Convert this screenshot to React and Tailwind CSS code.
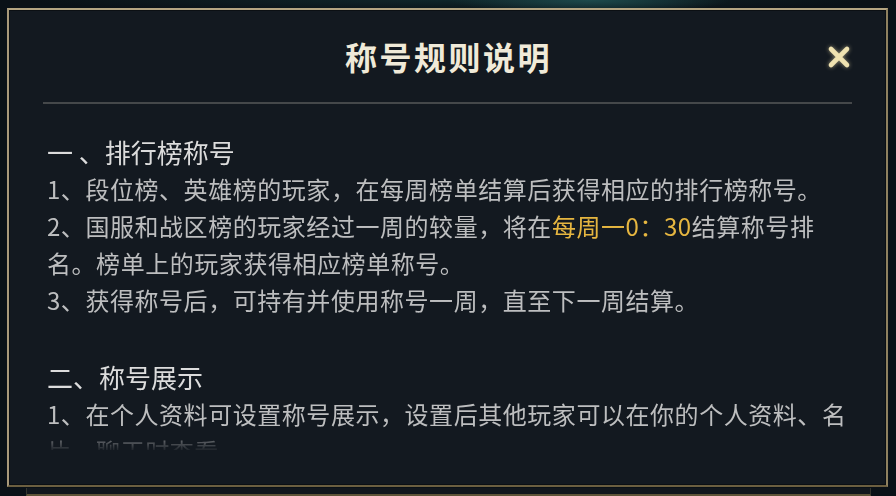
export default function App() {
  const body = "text-[24px] leading-[37px] tracking-[0.55px] text-[#bdbebf] whitespace-nowrap";
  const head = "text-[26px] leading-[37px] text-[#dcdcdc] whitespace-nowrap";
  return (
    <div
      className="w-[896px] h-[496px] overflow-hidden bg-[#0a1117] bg-[radial-gradient(ellipse_140px_14px_at_590px_0px,#1d4a4c_0%,transparent_100%),radial-gradient(ellipse_420px_12px_at_450px_0px,#10262a_0%,transparent_100%)] pt-[8px]"
      style={{ fontFamily: '"Noto Sans CJK SC", "Noto Sans", sans-serif' }}
    >
      {/* dialog frame */}
      <div className="ml-[7px] w-[881px] h-[479px] border-2 border-t-[#b4a582] border-l-[#a8997a] border-r-[#8f8160] border-b-[#6c5f40] bg-[#131920] shadow-[inset_0_0_0_1px_#0b0f13] flex flex-col">
        {/* header */}
        <div className="relative h-[92px] pt-[29px] flex justify-center">
          <h1 className="text-[32px] leading-[34px] font-bold tracking-[2.5px] pl-[2px] text-[#f0ead8]">
            称号规则说明
          </h1>
          <button className="absolute right-[35px] top-[35px] w-[24px] h-[24px] flex items-center justify-center drop-shadow-[0_0_2px_rgba(240,225,170,0.6)]">
            <svg viewBox="0 0 24 24" width="24" height="24">
              <path d="M4 4 L20 20 M20 4 L4 20" stroke="#efe2b0" strokeWidth="4.6" strokeLinecap="round" fill="none" />
            </svg>
          </button>
        </div>
        <div className="mx-[34px] h-[2px] bg-[#45484a]" />
        {/* scrolling rules text */}
        <div className="h-[346px] overflow-hidden pl-[38px] pt-[29px] [mask-image:linear-gradient(to_bottom,#000_322px,transparent_348px)]">
          <div className={head}>一 、排行榜称号</div>
          <div className={body}>1、段位榜、英雄榜的玩家，在每周榜单结算后获得相应的排行榜称号。</div>
          <div className={body}>
            2、国服和战区榜的玩家经过一周的较量，将在<span className="text-[#e6b640]">每周一0：30</span>结算称号排
          </div>
          <div className={body}>名。榜单上的玩家获得相应榜单称号。</div>
          <div className={body}>3、获得称号后，可持有并使用称号一周，直至下一周结算。</div>
          <div className={head + " mt-[40px]"}>二、称号展示</div>
          <div className={body}>1、在个人资料可设置称号展示，设置后其他玩家可以在你的个人资料、名</div>
          <div className={body}>片、聊天时查看。</div>
        </div>
      </div>
      {/* stacked panel behind */}
      <div className="ml-[26px] mt-[1px] w-[845px] h-[8px] bg-[#12171d] border-x border-[#34352f] border-b-2 border-b-[#5e5438]" />
    </div>
  );
}
